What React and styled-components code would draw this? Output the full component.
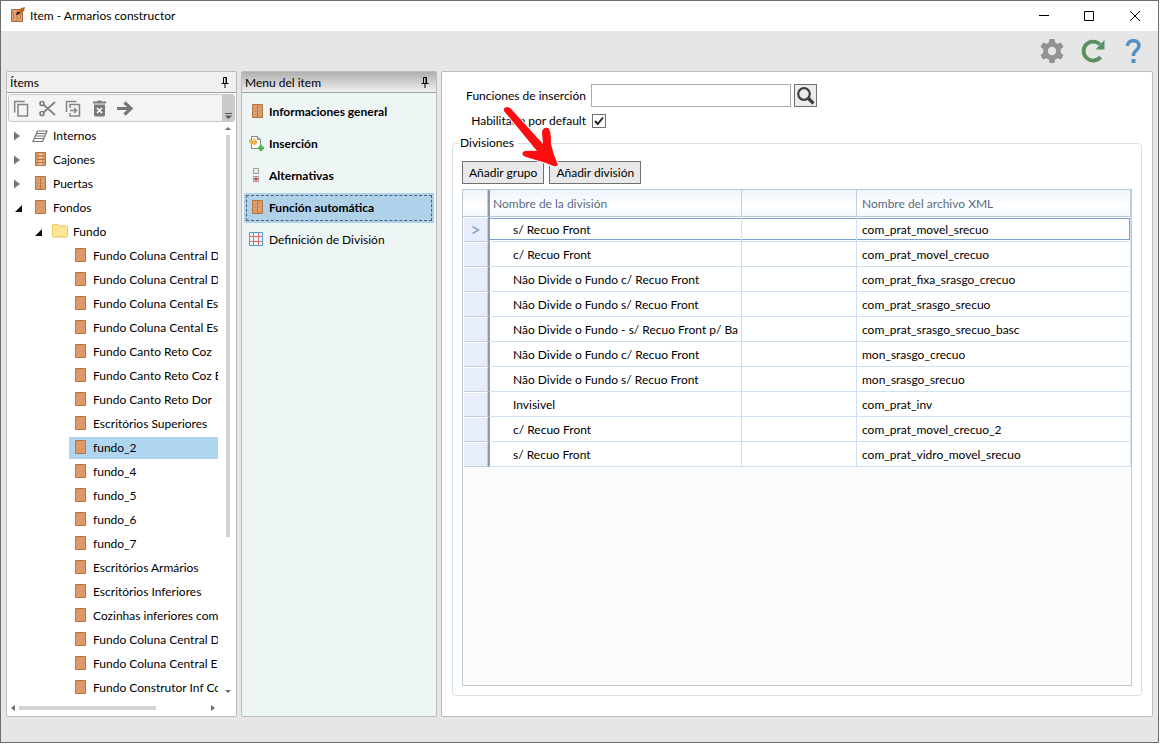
import React from 'react';
import styled, { createGlobalStyle } from 'styled-components';

const GlobalStyle = createGlobalStyle`
    * {
        box-sizing: border-box;
    }

    body {
        margin: 0;
        background-color: #fff;
        color: #000;
        font-family: Lato, "Open Sans", "Liberation Sans", sans-serif;
        font-size: 12px;
        line-height: 16px;
    }

    button, input {
        font: inherit;
        color: inherit;
        margin: 0;
        padding: 0;
    }

    svg {
        display: block;
        flex: none;
    }
`

const Window = styled.div`
    display: flex;
    flex-direction: column;
    height: calc(100vh - 5px);
    min-height: 480px;
    margin: 0 5px 5px 0;
    border: 1px solid #6d6d6d;
    background-color: #e6e6e6;
`
const TitleBar = styled.header`
    display: flex;
    align-items: center;
    height: 30px;
    flex: none;
    padding-left: 9px;
    background-color: #fff;
`
const Title = styled.h1`
    flex: 1;
    margin: 0 0 0 4px;
    font-size: 12px;
    font-weight: 400;
`
const WindowButton = styled.button`
    display: flex;
    align-items: center;
    justify-content: center;
    width: 46px;
    height: 30px;
    border: 0;
    background: none;
`
const ActionBar = styled.div`
    display: flex;
    align-items: center;
    justify-content: flex-end;
    gap: 17px;
    height: 40px;
    flex: none;
    padding-right: 12px;
`
const IconButton = styled.button`
    display: flex;
    align-items: center;
    justify-content: center;
    border: 0;
    background: none;
`
const Panels = styled.main`
    display: grid;
    grid-template-columns: 231px 196px minmax(0, 1fr);
    grid-template-rows: minmax(0, 1fr);
    gap: 4px;
    flex: 1;
    min-height: 0;
    padding: 0 5px 25px;
`
const Panel = styled.section`
    display: flex;
    flex-direction: column;
    min-width: 0;
    border: 1px solid #bcbcbc;
    border-radius: 2px;
    background-color: ${props => props.$color || '#fff'};
`
const PanelHeader = styled.div`
    display: flex;
    align-items: center;
    justify-content: space-between;
    height: 21px;
    flex: none;
    padding: 1px 7px 0 3px;
    border-bottom: 1px solid #a0a0a0;
    background: ${props => props.$active ? 'linear-gradient(#b0b0b0, #f0f0f0)' : '#f0f0f0'};
`
const PanelTitle = styled.h2`
    margin: 0;
    font-size: 12px;
    font-weight: 400;
`
const Toolbar = styled.div`
    display: flex;
    height: 28px;
    flex: none;
    margin: 1px 1px 2px;
    border: 1px solid #cacaca;
    border-radius: 3px;
    background-color: #f4f4f4;
`
const ToolbarButtons = styled.div`
    display: flex;
    align-items: center;
    gap: 6px;
    flex: 1;
    padding-left: 2px;

    button {
        width: 20px;
    }
`
const ToolbarOverflow = styled.button`
    display: flex;
    align-items: flex-end;
    justify-content: center;
    width: 12px;
    padding-bottom: 2px;
    border: 0;
    background-color: #cacaca;
`
const TreeArea = styled.div`
    display: grid;
    grid-template-columns: minmax(0, 1fr) 18px;
    grid-template-rows: minmax(0, 1fr) 16px;
    flex: 1;
    min-height: 0;
`
const Tree = styled.ul`
    margin: 0;
    padding: 0;
    overflow: hidden;
    list-style: none;
`
const TreeRow = styled.li`
    display: flex;
    align-items: center;
    height: 24px;
    padding-left: ${props => 5 + props.$level * 20}px;
`
const Expander = styled.button`
    display: flex;
    align-items: center;
    width: 17px;
    height: 24px;
    flex: none;
    border: 0;
    background: none;
`
const TreeItem = styled.div`
    display: flex;
    align-items: center;
    gap: 5px;
    flex: 1;
    min-width: 0;
    height: 22px;
    padding-left: 3px;
    overflow: hidden;
    white-space: nowrap;
    background-color: ${props => props.$selected ? '#b0d5f1' : 'transparent'};
`
const IconSlot = styled.span`
    display: flex;
    justify-content: center;
    width: 16px;
    flex: none;
`
const VerticalScroll = styled.div`
    display: flex;
    flex-direction: column;
    align-items: center;
    padding: 1px 0 5px 2px;
`
const VerticalTrack = styled.div`
    flex: 1;
    width: 4px;
    margin: 4px 0;
`
const VerticalThumb = styled.div`
    height: 73%;
    background-color: #d2d2d2;
`
const HorizontalScroll = styled.div`
    display: flex;
    align-items: center;
    padding: 0 2px 0 3px;
`
const HorizontalTrack = styled.div`
    flex: 1;
    height: 4px;
    margin: 0 3px;
`
const HorizontalThumb = styled.div`
    width: 73%;
    height: 4px;
    background-color: #d2d2d2;
`
const Menu = styled.nav`
    display: flex;
    flex-direction: column;
    gap: 2px;
    padding: 4px 2px;
`
const MenuItem = styled.button`
    display: flex;
    align-items: center;
    gap: 4px;
    height: 30px;
    padding: 0 3px;
    border: 2px solid transparent;
    border-color: ${props => props.$selected ? '#b0d1ea' : 'transparent'};
    background-color: ${props => props.$selected ? '#b0d1ea' : 'transparent'};
    outline: ${props => props.$selected ? '1px dashed #4c6070' : 'none'};
    outline-offset: -3px;
    font-weight: ${props => props.$bold ? 700 : 400};
    text-align: left;
`
const Content = styled(Panel)`
    position: relative;
    padding: 12px 10px 20px;
`
const Form = styled.form`
    display: grid;
    grid-template-columns: 134px minmax(0, 1fr);
    column-gap: 5px;
    row-gap: 6px;
    align-items: center;
`
const Label = styled.label`
    text-align: right;
    white-space: nowrap;
`
const SearchField = styled.div`
    display: flex;
    gap: 3px;
`
const TextInput = styled.input`
    width: 200px;
    height: 23px;
    padding: 0 4px;
    border: 1px solid #abadb3;
`
const SearchButton = styled.button`
    display: flex;
    align-items: center;
    justify-content: center;
    width: 23px;
    height: 23px;
    border: 1px solid #707070;
    background-color: #ececec;
`
const CheckField = styled.div`
    display: flex;
    align-items: center;
    height: 16px;
    padding-left: 1px;
`
const Checkbox = styled.input`
    appearance: none;
    width: 14px;
    height: 14px;
    border: 1px solid #707070;
    background-color: #fff;
`
const CheckMark = styled.svg`
    margin-left: -12px;
    pointer-events: none;
`
const Group = styled.fieldset`
    display: flex;
    flex-direction: column;
    flex: 1;
    min-width: 0;
    min-height: 0;
    margin: 6px 0 0;
    padding: 10px 9px 9px;
    border: 1px solid #d5dfe5;
    border-radius: 4px;
`
const Legend = styled.legend`
    margin-left: -3px;
    padding: 0 4px 0 1px;
`
const GroupButtons = styled.div`
    display: flex;
    gap: 5px;
    margin-bottom: 5px;
`
const PushButton = styled.button`
    height: 23px;
    padding: 0 6px;
    border: 1px solid #707070;
    background-color: #e9e9e9;
    white-space: nowrap;
`
const Grid = styled.div`
    flex: 1;
    min-height: 0;
    overflow: hidden;
    border: 1px solid #bdc8d6;
    background-color: #fbfbfb;
`
const Table = styled.table`
    width: 100%;
    table-layout: fixed;
    border-collapse: separate;
    border-spacing: 0;
    background-color: #fff;
`
const HeadCell = styled.th`
    height: 27px;
    padding: 1px 0 0 ${props => props.$first ? 3 : 5}px;
    border-right: 1px solid #c3cede;
    border-bottom: 1px solid #b9c6da;
    border-left: ${props => props.$first ? '2px solid #8e98a6' : '0'};
    background: linear-gradient(#eef2fb, #fff 60%, #f3f6fc);
    color: #586a80;
    font-weight: 400;
    text-align: left;
`
const RowHeader = styled.th`
    height: 25px;
    padding: 0;
    border: 1px solid #fff;
    border-right: 1px solid #c3cede;
    border-bottom: 1px solid #c3cede;
    background-color: #e7edfa;
`
const Cell = styled.td`
    height: 25px;
    padding: 0;
    border-right: 1px solid #cfe0f3;
    border-bottom: 1px solid #cfe0f3;
    border-left: ${props => props.$first ? '2px solid #8e98a6' : '0'};
`
const CellText = styled.div`
    height: 22px;
    margin-right: ${props => props.$first ? 2 : 0}px;
    padding-left: ${props => props.$first ? 23 : 5}px;
    overflow: hidden;
    line-height: 24px;
    white-space: nowrap;
    ${props => props.$current && `
        margin-right: 0;
        border-top: 1px solid #7b9fd0;
        border-bottom: 1px solid #7b9fd0;
        line-height: 22px;
    `}
    ${props => props.$current && props.$last && 'border-right: 1px solid #7b9fd0;'}
`
const Pointer = styled.svg`
    position: absolute;
    top: 32px;
    left: 58px;
    pointer-events: none;
`

const Board = ({ children }) => (
    <svg width="12" height="16" viewBox="-1 0 12 16" aria-hidden="true">
        <path d="M.5.5h10v13H.5z" fill="#dd9a68" stroke="#b27844" />
        {children}
    </svg>
)

const DoorsIcon = () => (
    <Board>
        <path d="M5.500 1v12" stroke="#a86f42" strokeWidth=".8" />
        <path d="M4 5.500v3M7 5.500v3" stroke="#f1dfd0" />
        <path d="M3 7h1.500M6.500 7h1.500" stroke="#8b5a35" />
    </Board>
)

const DrawersIcon = () => (
    <Board>
        <path d="M1 4h9M1 7.500h9M1 10.500h9" stroke="#b27844" />
        <path d="M4 2.500h3M4 5.700h3M4 9h3M4 12h3" stroke="#f7e9dc" />
    </Board>
)

const ShelvesIcon = () => (
    <svg width="16" height="12" viewBox="0 0 16 12" aria-hidden="true">
        <path d="M5.500 1h9.500L10.500 11.500H1zM4.500 3.500H14M3.500 6H13M2.300 8.500h9.500" fill="#fff" stroke="#777" strokeWidth="1.200" />
    </svg>
)

const FolderIcon = () => (
    <svg width="16" height="16" viewBox="0 0 16 16" aria-hidden="true">
        <path d="M.5 2Q.5.500 2 .5h3.500L7 2h7q1.500 0 1.500 1.500v8q0 1.500-1.500 1.500H2Q.5 13 .5 11.500z" fill="#fee794" stroke="#eac557" />
    </svg>
)

const InsertIcon = () => (
    <svg width="16" height="16" viewBox="0 0 16 16" aria-hidden="true">
        <path d="M2.500.5h6l3 3v9h-9z" fill="#fff" stroke="#888" />
        <path d="M8.500.5v3h3" fill="none" stroke="#888" />
        <path d="M0 3l2 2h3V2.500L8.500 6 5 9.500V7.500H2L0 5.500z" fill="#f7b246" stroke="#e59a2f" strokeWidth=".6" />
        <path d="M12 9v6M9 12h6" stroke="#4bb648" strokeWidth="2.600" />
    </svg>
)

const RadioIcon = () => (
    <svg width="16" height="16" viewBox="0 0 16 16" aria-hidden="true">
        <path d="M4.500.5h5v5h-5zM4.500 8.500h5v5h-5z" fill="#eee" stroke="#999" />
        <path d="M6.500 9.500h1l1 1v1l-1 1h-1l-1-1v-1z" fill="#cf2a38" />
    </svg>
)

const GridIcon = () => (
    <svg width="16" height="16" viewBox="0 0 16 16" aria-hidden="true">
        <path d="M4.500 1v12M9.500 1v12M1 4.500h12M1 9.500h12" stroke="#d96b6b" />
        <path d="M.5.500h13v13H.5z" fill="none" stroke="#5b9bd5" />
    </svg>
)

const PinIcon = () => (
    <svg width="8" height="11" viewBox="0 0 8 11" aria-hidden="true">
        <path d="M2.500 6V.5h3V6M.5 6.500h7M4 7v4M5 1v5" fill="none" stroke="#000" />
    </svg>
)

const AppIcon = () => (
    <svg width="16" height="18" viewBox="0 0 16 18" aria-hidden="true">
        <path d="M1.500 2.500h11v12h-11z" fill="#e2a06f" stroke="#a96937" />
        <path d="M7 3v11M3.500 5v7M10.500 7v5" stroke="#bd7c4c" />
        <path d="M8 5l3-4 4-1-1 4-4 3z" fill="#b9651e" />
        <path d="M6 8l1-3h2l1 2z" fill="#222" />
    </svg>
)

const Triangle = ({ dir }) => {
    const paths = { up: 'M0 5L3 2l3 3z', down: 'M0 1h6L3 4z', left: 'M5 0v6L1 3z', right: 'M1 0v6l4-3z' }
    return (
        <svg width="6" height="6" viewBox="0 0 6 6" aria-hidden="true">
            <path d={paths[dir]} fill="#6e6e6e" />
        </svg>
    )
}

const tools = [
    {
        label: 'Duplicar',
        icon: <path d="M1.700 12.500V1.500h10M5 4.500h9.500V16H5z" fill="none" stroke="#858585" strokeWidth="1.500" />
    },
    {
        label: 'Cortar',
        icon: <path d="M5 5l11 10M5 12L16 2M5 3.500a2 2 0 1 1-4 0a2 2 0 1 1 4 0M5 13.500a2 2 0 1 1-4 0a2 2 0 1 1 4 0" fill="none" stroke="#808080" strokeWidth="1.700" />
    },
    {
        label: 'Copiar en',
        icon: <path d="M1.500 12V1.500h10M5 8V4.500h9.500V16H5v-3M5 10.500h6M9 8l2.500 2.500L9 13" fill="none" stroke="#858585" strokeWidth="1.500" />
    },
    {
        label: 'Eliminar',
        icon: (
            <>
                <path d="M2 1.500h4l1-1h3l1 1h4v2H2zM3 4.500h11V15l-1 1.500H4L3 15z" fill="#7a7a7a" />
                <path d="M6 8l5 5M11 8l-5 5" stroke="#fff" strokeWidth="1.700" />
            </>
        )
    },
    {
        label: 'Mover',
        icon: <path d="M0 8.500h14M7.500 2.500l6.500 6-6.500 6" fill="none" stroke="#777" strokeWidth="3.200" />
    }
]

const treeItems = [
    { name: 'Internos', level: 0, state: 'closed', icon: <ShelvesIcon /> },
    { name: 'Cajones', level: 0, state: 'closed', icon: <DrawersIcon /> },
    { name: 'Puertas', level: 0, state: 'closed', icon: <DoorsIcon /> },
    { name: 'Fondos', level: 0, state: 'open', icon: <Board /> },
    { name: 'Fundo', level: 1, state: 'open', icon: <FolderIcon /> },
    { name: 'Fundo Coluna Central D', level: 2 },
    { name: 'Fundo Coluna Central D', level: 2 },
    { name: 'Fundo Coluna Cental Es', level: 2 },
    { name: 'Fundo Coluna Cental Es', level: 2 },
    { name: 'Fundo Canto Reto Coz', level: 2 },
    { name: 'Fundo Canto Reto Coz E', level: 2 },
    { name: 'Fundo Canto Reto Dor', level: 2 },
    { name: 'Escritórios Superiores', level: 2 },
    { name: 'fundo_2', level: 2 },
    { name: 'fundo_4', level: 2 },
    { name: 'fundo_5', level: 2 },
    { name: 'fundo_6', level: 2 },
    { name: 'fundo_7', level: 2 },
    { name: 'Escritórios Armários', level: 2 },
    { name: 'Escritórios Inferiores', level: 2 },
    { name: 'Cozinhas inferiores com', level: 2 },
    { name: 'Fundo Coluna Central D', level: 2 },
    { name: 'Fundo Coluna Central E', level: 2 },
    { name: 'Fundo Construtor Inf Co', level: 2 }
]

const menuItems = [
    { name: 'Informaciones general', icon: <DoorsIcon />, bold: true },
    { name: 'Inserción', icon: <InsertIcon />, bold: true },
    { name: 'Alternativas', icon: <RadioIcon />, bold: true },
    { name: 'Función automática', icon: <DoorsIcon />, bold: true },
    { name: 'Definición de División', icon: <GridIcon />, bold: false }
]

const divisions = [
    ['s/ Recuo Front', 'com_prat_movel_srecuo'],
    ['c/ Recuo Front', 'com_prat_movel_crecuo'],
    ['Não Divide o Fundo c/ Recuo Front', 'com_prat_fixa_srasgo_crecuo'],
    ['Não Divide o Fundo s/ Recuo Front', 'com_prat_srasgo_srecuo'],
    ['Não Divide o Fundo - s/ Recuo Front p/ Ba', 'com_prat_srasgo_srecuo_basc'],
    ['Não Divide o Fundo c/ Recuo Front', 'mon_srasgo_crecuo'],
    ['Não Divide o Fundo s/ Recuo Front', 'mon_srasgo_srecuo'],
    ['Invisivel', 'com_prat_inv'],
    ['c/ Recuo Front', 'com_prat_movel_crecuo_2'],
    ['s/ Recuo Front', 'com_prat_vidro_movel_srecuo']
]

export default class App extends React.Component {
    state = {
        selectedItem: 13,
        selectedMenu: 'Función automática',
        currentRow: 0,
        enabled: true
    }

    renderExpander = (item) => {
        if (!item.state) {
            return <Expander as="span" />
        }
        return (
            <Expander type="button" aria-label={item.name}>
                {item.state === 'closed'
                    ? <svg width="8" height="10" viewBox="0 0 8 10"><path d="M2 .5v9L8 5z" fill="#777" /></svg>
                    : <svg width="10" height="9" viewBox="0 0 10 9"><path d="M10 1v7H3z" fill="#111" /></svg>}
            </Expander>
        )
    }

    render() {
        const { selectedItem, selectedMenu, currentRow, enabled } = this.state

        return (
            <>
                <GlobalStyle />
                <Window>
                    <TitleBar>
                        <AppIcon />
                        <Title>Item - Armarios constructor</Title>
                        <WindowButton type="button" aria-label="Minimizar">
                            <svg width="12" height="10"><path d="M2 4.500h10" stroke="#000" /></svg>
                        </WindowButton>
                        <WindowButton type="button" aria-label="Maximizar">
                            <svg width="10" height="10"><path d="M.5.500h9v9h-9z" fill="none" stroke="#000" /></svg>
                        </WindowButton>
                        <WindowButton type="button" aria-label="Cerrar">
                            <svg width="10" height="10"><path d="M0 0l10 10M10 0L0 10" stroke="#000" /></svg>
                        </WindowButton>
                    </TitleBar>
                    <ActionBar>
                        <IconButton type="button" aria-label="Configuración">
                            <svg width="24" height="24" viewBox="0 0 24 24">
                                <path d="M9.500 0h5l.7 3.500 2.300 1.300 3.400-1.300 2.600 4.300-2.800 2.400v3.600l2.800 2.400-2.600 4.300-3.400-1.300-2.300 1.300-.7 3.500h-5l-.7-3.500-2.300-1.300-3.400 1.300L.5 16.200l2.800-2.400v-3.600L.5 7.800l2.600-4.300 3.400 1.300 2.300-1.300zM16.200 12a4.200 4.200 0 1 0-8.400 0a4.200 4.200 0 1 0 8.400 0z" fill="#929292" fillRule="evenodd" />
                            </svg>
                        </IconButton>
                        <IconButton type="button" aria-label="Actualizar">
                            <svg width="24" height="24" viewBox="0 0 24 24">
                                <path d="M19 5.500A9.500 9.500 0 1 0 19.500 18" fill="none" stroke="#5b9162" strokeWidth="3.800" />
                                <path d="M23.500 1v9.500H14.500z" fill="#5b9162" />
                            </svg>
                        </IconButton>
                        <IconButton type="button" aria-label="Ayuda">
                            <svg width="24" height="24" viewBox="0 0 24 24">
                                <path d="M5.500 7c0-7 11.500-7 11.500-.5 0 5-5.700 4.500-5.700 10.500" fill="none" stroke="#5190c6" strokeWidth="3.500" />
                                <path d="M9.500 20h4v4h-4z" fill="#5190c6" />
                            </svg>
                        </IconButton>
                    </ActionBar>
                    <Panels>
                        <Panel>
                            <PanelHeader>
                                <PanelTitle>Ítems</PanelTitle>
                                <IconButton type="button" aria-label="Fijar ítems"><PinIcon /></IconButton>
                            </PanelHeader>
                            <Toolbar>
                                <ToolbarButtons>
                                    {tools.map((tool) => (
                                        <IconButton key={tool.label} type="button" aria-label={tool.label}>
                                            <svg width="17" height="17" viewBox="0 0 17 17">{tool.icon}</svg>
                                        </IconButton>
                                    ))}
                                </ToolbarButtons>
                                <ToolbarOverflow type="button" aria-label="Más opciones">
                                    <svg width="7" height="6"><path d="M0 .5h7" stroke="#555" /><path d="M0 2.500h7L3.500 6z" fill="#555" /></svg>
                                </ToolbarOverflow>
                            </Toolbar>
                            <TreeArea>
                                <Tree>
                                    {treeItems.map((item, index) => (
                                        <TreeRow key={index} $level={item.level}>
                                            {this.renderExpander(item)}
                                            <TreeItem
                                                $selected={index === selectedItem}
                                                onClick={() => this.setState({ selectedItem: index })}
                                            >
                                                <IconSlot>{item.icon || <Board />}</IconSlot>
                                                {item.name}
                                            </TreeItem>
                                        </TreeRow>
                                    ))}
                                </Tree>
                                <VerticalScroll>
                                    <Triangle dir="up" />
                                    <VerticalTrack><VerticalThumb /></VerticalTrack>
                                    <Triangle dir="down" />
                                </VerticalScroll>
                                <HorizontalScroll>
                                    <Triangle dir="left" />
                                    <HorizontalTrack><HorizontalThumb /></HorizontalTrack>
                                    <Triangle dir="right" />
                                </HorizontalScroll>
                            </TreeArea>
                        </Panel>

                        <Panel $color="#eef5f5">
                            <PanelHeader $active>
                                <PanelTitle>Menu del item</PanelTitle>
                                <IconButton type="button" aria-label="Fijar menu"><PinIcon /></IconButton>
                            </PanelHeader>
                            <Menu>
                                {menuItems.map((item) => (
                                    <MenuItem
                                        key={item.name}
                                        type="button"
                                        $bold={item.bold}
                                        $selected={item.name === selectedMenu}
                                        onClick={() => this.setState({ selectedMenu: item.name })}
                                    >
                                        <IconSlot>{item.icon}</IconSlot>
                                        {item.name}
                                    </MenuItem>
                                ))}
                            </Menu>
                        </Panel>

                        <Content>
                            <Form onSubmit={(event) => event.preventDefault()}>
                                <Label htmlFor="funciones">Funciones de inserción</Label>
                                <SearchField>
                                    <TextInput id="funciones" type="text" />
                                    <SearchButton type="button" aria-label="Buscar">
                                        <svg width="19" height="19" viewBox="0 0 19 19">
                                            <circle cx="8" cy="8" r="5.800" fill="none" stroke="#3c4043" strokeWidth="2.200" />
                                            <path d="M12 12l5.500 5.500" stroke="#3c4043" strokeWidth="3.200" />
                                        </svg>
                                    </SearchButton>
                                </SearchField>
                                <Label htmlFor="habilitado">Habilitado por default</Label>
                                <CheckField>
                                    <Checkbox
                                        id="habilitado"
                                        type="checkbox"
                                        checked={enabled}
                                        onChange={() => this.setState({ enabled: !enabled })}
                                    />
                                    {enabled && (
                                        <CheckMark width="10" height="10" viewBox="0 0 10 10">
                                            <path d="M1 5l2.800 3L9 1.500" fill="none" stroke="#212121" strokeWidth="2" />
                                        </CheckMark>
                                    )}
                                </CheckField>
                            </Form>
                            <Group>
                                <Legend>Divisiones</Legend>
                                <GroupButtons>
                                    <PushButton type="button">Añadir grupo</PushButton>
                                    <PushButton type="button">Añadir división</PushButton>
                                </GroupButtons>
                                <Grid>
                                    <Table>
                                        <colgroup>
                                            <col width="25" />
                                            <col width="254" />
                                            <col width="115" />
                                            <col />
                                        </colgroup>
                                        <thead>
                                            <tr>
                                                <HeadCell aria-label="Fila" />
                                                <HeadCell $first>Nombre de la división</HeadCell>
                                                <HeadCell />
                                                <HeadCell>Nombre del archivo XML</HeadCell>
                                            </tr>
                                        </thead>
                                        <tbody>
                                            {divisions.map(([name, file], index) => {
                                                const current = index === currentRow
                                                return (
                                                    <tr key={file} onClick={() => this.setState({ currentRow: index })}>
                                                        <RowHeader scope="row">
                                                            {current && (
                                                                <svg width="23" height="10" viewBox="0 0 23 10">
                                                                    <path d="M8.500 1.500L14.500 5l-6 3.500" fill="none" stroke="#8fa5c8" strokeWidth="1.600" />
                                                                </svg>
                                                            )}
                                                        </RowHeader>
                                                        <Cell $first><CellText $first $current={current}>{name}</CellText></Cell>
                                                        <Cell><CellText $current={current} /></Cell>
                                                        <Cell><CellText $last $current={current}>{file}</CellText></Cell>
                                                    </tr>
                                                )
                                            })}
                                        </tbody>
                                    </Table>
                                </Grid>
                            </Group>
                            <Pointer width="64" height="70" viewBox="0 0 64 70" aria-hidden="true">
                                <path
                                    d="M4 7Q3 3 8 3Q11 4 13 7L43 40L42 28Q43 23 48 24Q51 25 51 40Q53 50 58 61Q56 64 46 59L26 53Q21 51 23 48Q25 46 37 47Z"
                                    fill="#fd0d0d"
                                    stroke="#fff"
                                    strokeWidth="2"
                                    strokeLinejoin="round"
                                    paintOrder="stroke"
                                />
                            </Pointer>
                        </Content>
                    </Panels>
                </Window>
            </>
        )
    }
}
